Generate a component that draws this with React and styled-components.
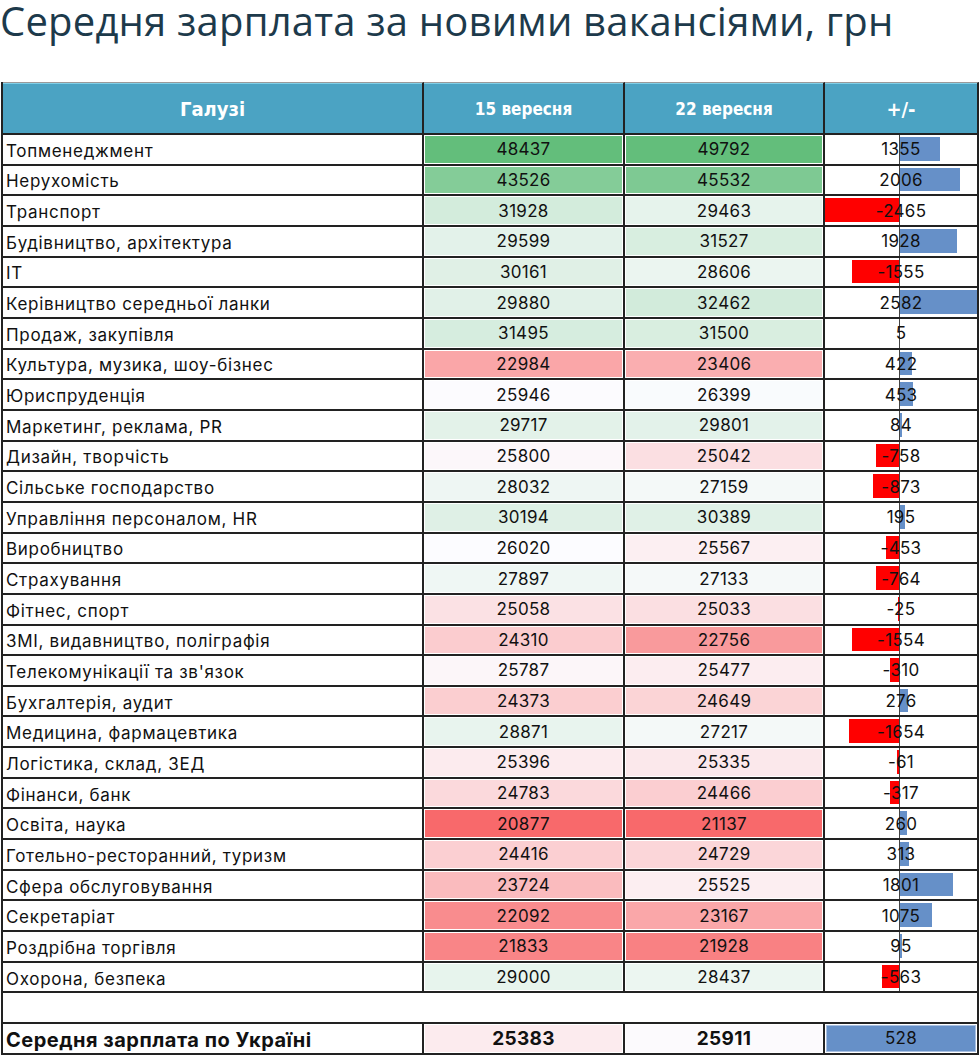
import React from 'react'
import styled, { createGlobalStyle } from 'styled-components'

const GlobalStyle = createGlobalStyle`
  html, body {
    margin: 0;
    padding: 0;
    background: #ffffff;
  }
  body {
    font-family: 'Inter', 'DejaVu Sans', sans-serif;
    color: #111;
  }
`

const rows = [
  ['Топменеджмент', 48437, 49792],
  ['Нерухомість', 43526, 45532],
  ['Транспорт', 31928, 29463],
  ['Будівництво, архітектура', 29599, 31527],
  ['IT', 30161, 28606],
  ['Керівництво середньої ланки', 29880, 32462],
  ['Продаж, закупівля', 31495, 31500],
  ['Культура, музика, шоу-бізнес', 22984, 23406],
  ['Юриспруденція', 25946, 26399],
  ['Маркетинг, реклама, PR', 29717, 29801],
  ['Дизайн, творчість', 25800, 25042],
  ['Сільське господарство', 28032, 27159],
  ['Управління персоналом, HR', 30194, 30389],
  ['Виробництво', 26020, 25567],
  ['Страхування', 27897, 27133],
  ['Фітнес, спорт', 25058, 25033],
  ['ЗМІ, видавництво, поліграфія', 24310, 22756],
  ["Телекомунікації та зв'язок", 25787, 25477],
  ['Бухгалтерія, аудит', 24373, 24649],
  ['Медицина, фармацевтика', 28871, 27217],
  ['Логістика, склад, ЗЕД', 25396, 25335],
  ['Фінанси, банк', 24783, 24466],
  ['Освіта, наука', 20877, 21137],
  ['Готельно-ресторанний, туризм', 24416, 24729],
  ['Сфера обслуговування', 23724, 25525],
  ['Секретаріат', 22092, 23167],
  ['Роздрібна торгівля', 21833, 21928],
  ['Охорона, безпека', 29000, 28437],
]

const total = [25383, 25911]

// excel style 3-colour scale: red / white / green
const RED = [248, 105, 107]
const MID = [252, 252, 255]
const GREEN = [99, 190, 123]

const mix = (a, b, t) =>
  `rgb(${a.map((v, i) => Math.round(v + (b[i] - v) * t)).join(',')})`

const makeScale = (values) => {
  const s = [...values].sort((a, b) => a - b)
  const min = s[0]
  const max = s[s.length - 1]
  const n = s.length
  const med = n % 2 ? s[(n - 1) / 2] : (s[n / 2 - 1] + s[n / 2]) / 2
  return (v) => {
    if (v >= med) return mix(MID, GREEN, Math.min(1, (v - med) / (max - med)))
    return mix(MID, RED, Math.min(1, (med - v) / (med - min)))
  }
}

const scaleA = makeScale(rows.map((r) => r[1]))
const scaleB = makeScale(rows.map((r) => r[2]))

const diffs = rows.map((r) => r[2] - r[1])
const maxNeg = Math.abs(Math.min(...diffs))
const maxPos = Math.max(...diffs)
const BAR_AREA = 152
const unit = BAR_AREA / (maxNeg + maxPos)
const axisX = maxNeg * unit

const Page = styled.div`
  width: 980px;
  padding-top: 2px;
`

const Title = styled.h1`
  margin: 0 0 43px 0;
  font-family: 'Open Sans', sans-serif;
  font-weight: 400;
  font-size: 40px;
  line-height: 37px;
  letter-spacing: 0.2px;
  color: #1d3a4b;
  white-space: nowrap;
`

const Table = styled.div`
  margin-left: 1px;
  width: 978px;
  display: grid;
  grid-template-columns: 421px 201px 200px 154px;
  grid-template-rows: 53px;
  grid-auto-rows: 30.66px;
  border-left: 2px solid #222;
  box-sizing: border-box;
`

const HeadCell = styled.div`
  box-sizing: border-box;
  display: flex;
  align-items: center;
  justify-content: center;
  background: #4ba3c3;
  border-top: 1px solid #9a9a9a;
  box-shadow: inset 0 1px 0 #7fcfe8;
  border-right: 2px solid #222;
  border-bottom: 2px solid #222;
  color: #fff;
  font-family: 'DejaVu Sans Condensed', 'DejaVu Sans', sans-serif;
  font-stretch: condensed;
  font-weight: 700;
  font-size: ${(p) => (p.$big ? '20px' : '17px')};
  padding-top: 1px;
`

const Cell = styled.div`
  box-sizing: border-box;
  border-right: 2px solid #222;
  border-bottom: 2px solid #222;
  background: ${(p) => p.$fill || '#fff'};
  box-shadow: inset 0 0 0 1px #fff;
  display: flex;
  align-items: center;
  justify-content: ${(p) => (p.$left ? 'flex-start' : 'center')};
  padding: ${(p) => (p.$left ? '3px 0 0 3px' : '0')};
  font-size: ${(p) => (p.$bold ? (p.$left ? '20px' : '19px') : '17px')};
  font-weight: ${(p) => (p.$bold ? 700 : 400)};
  letter-spacing: ${(p) => (p.$left ? (p.$bold ? '0.5px' : '0.7px') : '0.3px')};
  white-space: nowrap;
  overflow: hidden;
`

const BlankRow = styled.div`
  grid-column: 1 / -1;
  box-sizing: border-box;
  border-right: 2px solid #222;
  border-bottom: 2px solid #222;
`

const BarCell = styled.div`
  position: relative;
  box-sizing: border-box;
  border-right: 2px solid #222;
  border-bottom: 2px solid #222;
  display: flex;
  align-items: center;
  justify-content: center;
  font-size: 17px;
  letter-spacing: 0.3px;
`

const Axis = styled.div`
  position: absolute;
  top: 0;
  bottom: 0;
  width: 1px;
  background: #444;
`

const Bar = styled.div`
  position: absolute;
  top: 2px;
  bottom: 3px;
  background: ${(p) => (p.$neg ? '#ff0000' : '#6690c8')};
`

const BarValue = styled.span`
  position: relative;
  z-index: 1;
`

const TotalDiff = styled.div`
  box-sizing: border-box;
  border-right: 2px solid #222;
  border-bottom: 2px solid #222;
  display: flex;
  padding: 1px;
`

const TotalFill = styled.div`
  flex: 1;
  display: flex;
  align-items: center;
  justify-content: center;
  background: #6690c8;
  border: 1px solid #a8c0e2;
  font-size: 17px;
  letter-spacing: 0.3px;
`

const DiffCell = ({ value }) => {
  const w = Math.max(1, Math.abs(value) * unit)
  const left = value < 0 ? axisX - w : axisX
  return (
    <BarCell>
      <Bar $neg={value < 0} style={{ left, width: w }} />
      <Axis style={{ left: axisX }} />
      <BarValue>{value}</BarValue>
    </BarCell>
  )
}

export default function App() {
  return (
    <Page>
      <GlobalStyle />
      <Title>Середня зарплата за новими вакансіями, грн</Title>
      <Table>
        <HeadCell $big>Галузі</HeadCell>
        <HeadCell>15 вересня</HeadCell>
        <HeadCell>22 вересня</HeadCell>
        <HeadCell $big>+/-</HeadCell>
        {rows.map(([name, a, b], i) => (
          <React.Fragment key={name}>
            <Cell $left>{name}</Cell>
            <Cell $fill={scaleA(a)}>{a}</Cell>
            <Cell $fill={scaleB(b)}>{b}</Cell>
            <DiffCell value={diffs[i]} />
          </React.Fragment>
        ))}
        <BlankRow />
        <Cell $left $bold>Середня зарплата по Україні</Cell>
        <Cell $bold $fill={scaleA(total[0])}>{total[0]}</Cell>
        <Cell $bold $fill={scaleB(total[1])}>{total[1]}</Cell>
        <TotalDiff>
          <TotalFill>{total[1] - total[0]}</TotalFill>
        </TotalDiff>
      </Table>
    </Page>
  )
}
